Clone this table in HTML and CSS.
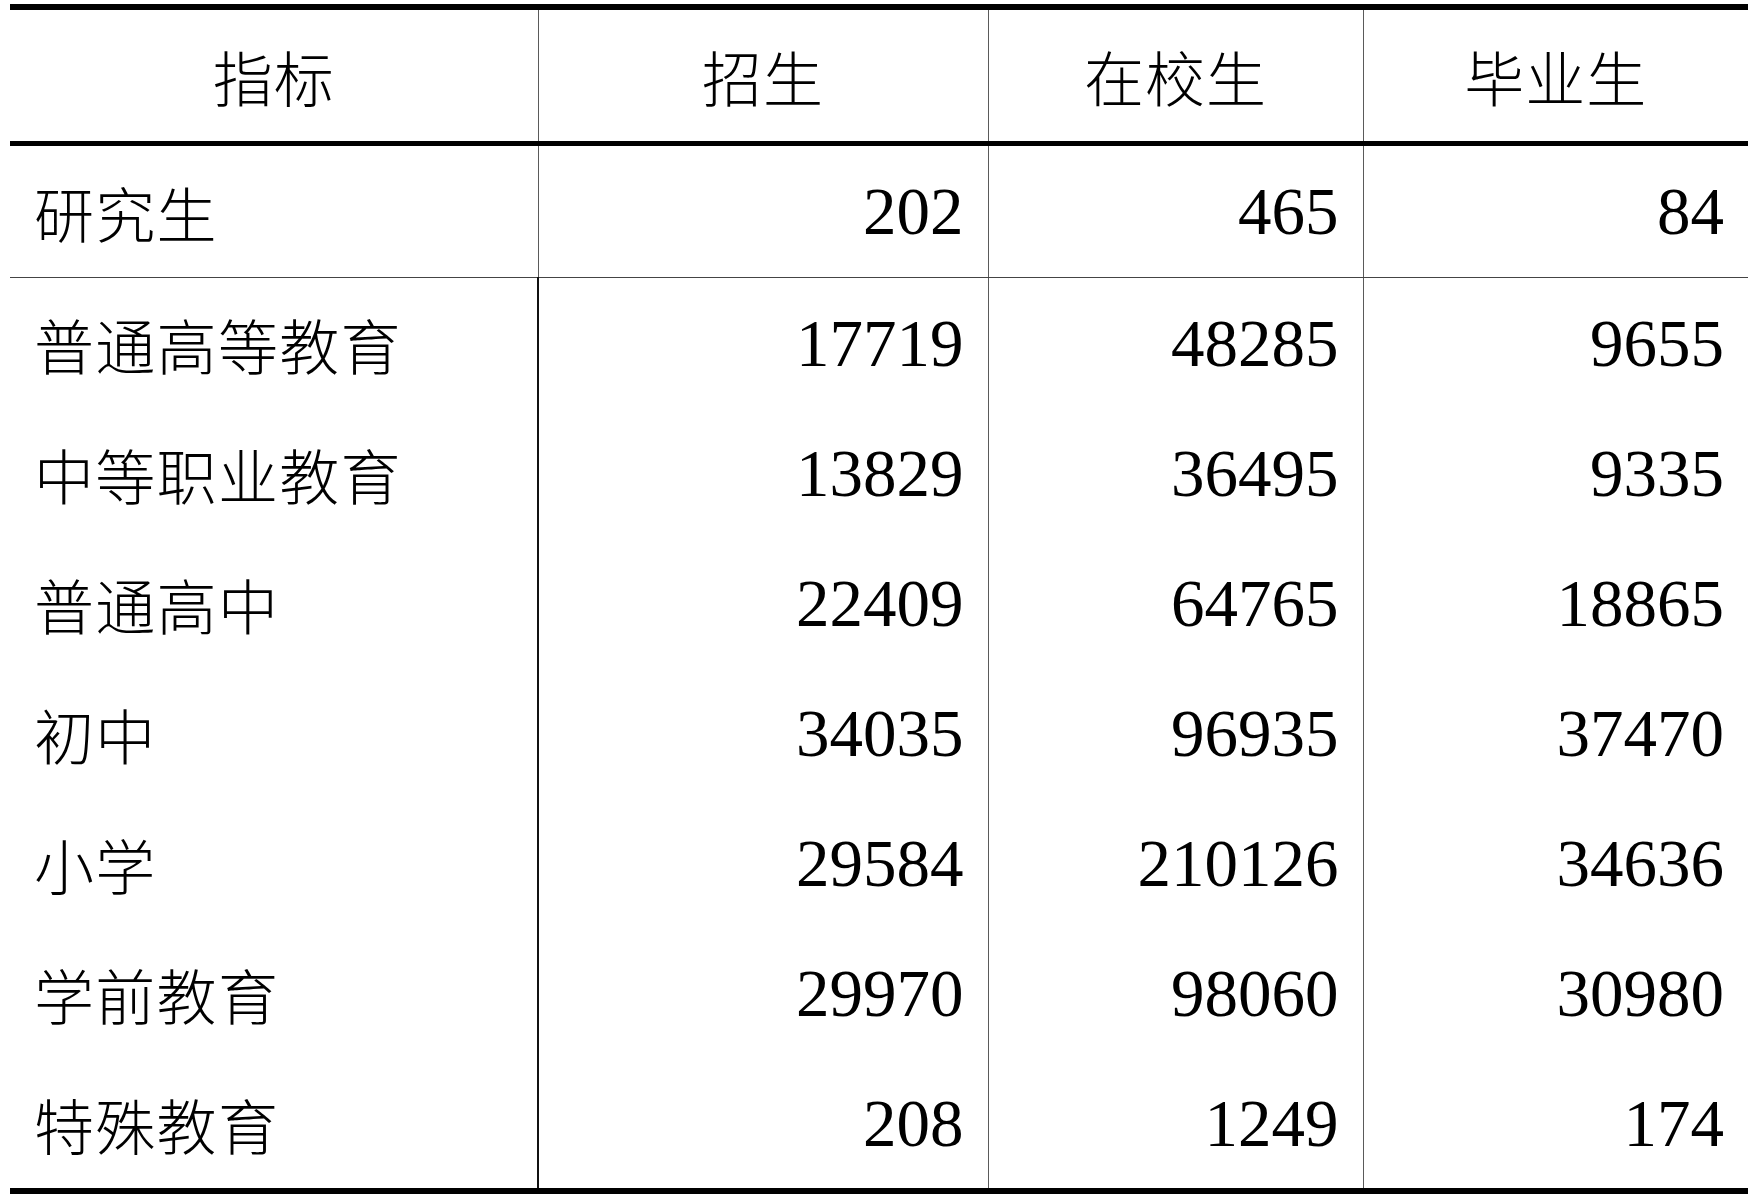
FILE: index.html
```html
<!DOCTYPE html>
<html lang="zh-CN">
<head>
<meta charset="utf-8">
<title>教育统计</title>
<link rel="stylesheet" href="styles.css">
</head>
<body>
<table class="stats">
  <colgroup>
    <col class="c1"><col class="c2"><col class="c3"><col class="c4">
  </colgroup>
  <thead>
    <tr class="head">
      <th>指标</th>
      <th>招生</th>
      <th>在校生</th>
      <th>毕业生</th>
    </tr>
  </thead>
  <tbody>
    <tr class="first">
      <td class="name">研究生</td><td class="num">202</td><td class="num">465</td><td class="num">84</td>
    </tr>
    <tr>
      <td class="name">普通高等教育</td><td class="num">17719</td><td class="num">48285</td><td class="num">9655</td>
    </tr>
    <tr>
      <td class="name">中等职业教育</td><td class="num">13829</td><td class="num">36495</td><td class="num">9335</td>
    </tr>
    <tr>
      <td class="name">普通高中</td><td class="num">22409</td><td class="num">64765</td><td class="num">18865</td>
    </tr>
    <tr>
      <td class="name">初中</td><td class="num">34035</td><td class="num">96935</td><td class="num">37470</td>
    </tr>
    <tr>
      <td class="name">小学</td><td class="num">29584</td><td class="num">210126</td><td class="num">34636</td>
    </tr>
    <tr>
      <td class="name">学前教育</td><td class="num">29970</td><td class="num">98060</td><td class="num">30980</td>
    </tr>
    <tr class="last">
      <td class="name">特殊教育</td><td class="num">208</td><td class="num">1249</td><td class="num">174</td>
    </tr>
  </tbody>
</table>
</body>
</html>
```

FILE: styles.css
```css
html, body {
  margin: 0;
  padding: 0;
  background: #ffffff;
}

body {
  padding: 4px 0 0 10px;
  font-family: "Noto Sans CJK SC", "Liberation Serif", serif;
  color: #000;
}

.stats {
  border-collapse: collapse;
  table-layout: fixed;
  width: 1738px;
  border-top: 6px solid #000;
  border-bottom: 6px solid #000;
}

.c1 { width: 528px; }
.c2 { width: 450px; }
.c3 { width: 375px; }
.c4 { width: 385px; }

.stats th,
.stats td {
  padding: 0;
  border-left: 1px solid #5a5a5a;
  vertical-align: middle;
}

.stats th:first-child,
.stats td:first-child {
  border-left: none;
}

.head th {
  height: 131px;
  font-weight: 300;
  font-size: 60px;
  text-align: center;
  letter-spacing: 1px;
  border-bottom: 5px solid #000;
}

.stats tbody tr td {
  height: 130px;
}

.stats tbody tr.first td {
  height: 131px;
  border-bottom: 1px solid #444;
}

.stats tbody tr:not(.first) td:nth-child(2) {
  border-left: 2px solid #111;
}

.name {
  font-family: "Noto Sans CJK SC", sans-serif;
  font-size: 60px;
  font-weight: 300;
  letter-spacing: 1.3px;
  text-align: left;
  padding-left: 24px !important;
}

.num {
  font-family: "Liberation Serif", "Times New Roman", serif;
  font-size: 67px;
  letter-spacing: 0;
  text-align: right;
  padding-right: 24px !important;
}
```
